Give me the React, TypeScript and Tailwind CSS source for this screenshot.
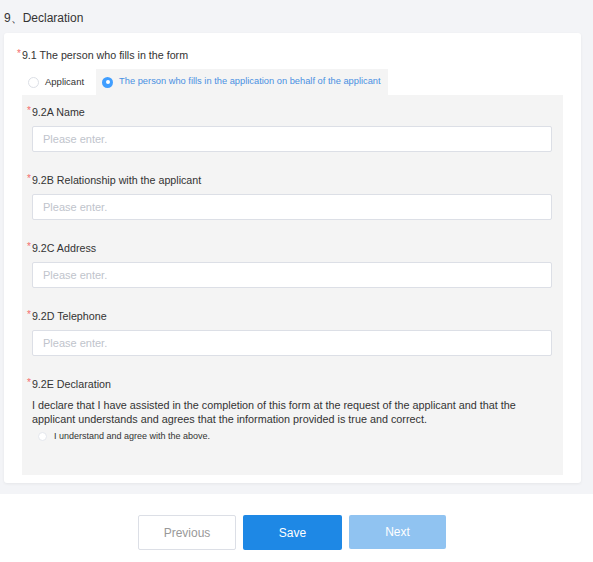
import React from "react";

const fields = [
  "9.2A Name",
  "9.2B Relationship with the applicant",
  "9.2C Address",
  "9.2D Telephone",
];

const Label = ({ text }: { text: string }) => (
  <div className="flex items-center h-4 text-[10.7px] text-[#333]">
    <span className="text-[#f56c6c] text-[10px] mr-[1px] -mt-[3px]">*</span>
    {text}
  </div>
);

const App = () => {
  return (
    <div className="w-[593px] h-[562px] bg-[#f3f4f7] font-['Liberation_Sans',Arial,sans-serif] overflow-hidden">
      <div className="h-[33px] pl-[4px] pt-[10px] text-[12px] text-[#333] leading-4">9、Declaration</div>

      <div className="mx-[4px] w-[577px] h-[450px] bg-white rounded-[3px] shadow-[0_1px_3px_rgba(0,0,0,0.06)] pt-[14px]">
        <div className="pl-[13px]">
          <Label text="9.1 The person who fills in the form" />
        </div>

        <div className="flex pl-[18px] mt-[6px] h-[26px]">
          <div className="flex items-center gap-[6px] px-[6px] text-[9.5px] text-[#333]">
            <span className="w-[11px] h-[11px] rounded-full border border-[#dcdfe6] bg-white" />
            Applicant
          </div>
          <div className="flex items-center gap-[6px] ml-[6px] pl-[6px] pr-[7px] bg-[#f4f4f4] text-[9.3px] text-[#4a90e2]">
            <span className="w-[11px] h-[11px] rounded-full bg-[#409eff] flex items-center justify-center">
              <span className="w-[4px] h-[4px] rounded-full bg-white" />
            </span>
            The person who fills in the application on behalf of the applicant
          </div>
        </div>

        <div className="mx-[18px] h-[380px] bg-[#f4f4f4] pt-[9px] pl-[5px] pr-[11px]">
          {fields.map((f) => (
            <div key={f} className="mb-[20px]">
              <Label text={f} />
              <div className="mt-[6px] ml-[5px] h-[26px] bg-white border border-[#dcdfe6] rounded-[2px] flex items-center pl-[10px] text-[11px] text-[#c0c4cc]">
                Please enter.
              </div>
            </div>
          ))}
          <Label text="9.2E Declaration" />
          <p className="mt-[6px] ml-[5px] text-[10.8px] leading-[14px] text-[#333]">
            I declare that I have assisted in the completion of this form at the request of the applicant and that the applicant understands and agrees that the information provided is true and correct.
          </p>
          <div className="flex items-center gap-[7px] ml-[11px] mt-[4px] text-[9px] text-[#333]">
            <span className="w-[9px] h-[9px] rounded-full border border-[#e4e7ed] bg-white" />
            I understand and agree with the above.
          </div>
        </div>
      </div>

      <div className="mt-[11px] h-[68px] bg-white flex justify-center gap-[7px] pt-[21px] pr-[9px]">
        <button className="w-[98px] h-[35px] border border-[#dcdfe6] rounded-[2px] bg-white text-[12px] text-[#999]">
          Previous
        </button>
        <button className="w-[99px] h-[35px] rounded-[2px] bg-[#1e88e5] text-[12px] text-white">
          Save
        </button>
        <button className="w-[97px] h-[34px] rounded-[2px] bg-[#90c3f1] text-[12px] text-white">
          Next
        </button>
      </div>
    </div>
  );
};

export default App;
